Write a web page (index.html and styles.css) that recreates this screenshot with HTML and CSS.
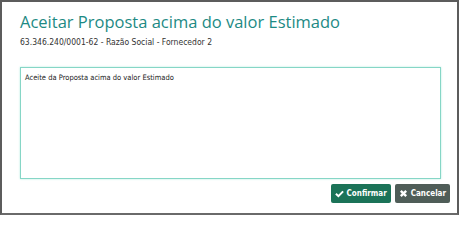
FILE: index.html
```html
<!DOCTYPE html>
<html lang="pt-BR">
<head>
<meta charset="utf-8">
<link rel="stylesheet" href="styles.css">
</head>
<body>
<div class="modal">
  <div class="modal-header">
    <h1 class="title">Aceitar Proposta acima do valor Estimado</h1>
    <p class="subtitle">63.346.240/0001-62 - Razão Social - Fornecedor 2</p>
  </div>
  <div class="modal-body">
    <div class="textarea">Aceite da Proposta acima do valor Estimado</div>
  </div>
  <div class="modal-footer">
    <button class="btn btn-confirm"><svg class="ico" viewBox="0 0 10 10"><path d="M1 5.2 L3.8 8 L9 2.6" fill="none" stroke="#fff" stroke-width="2.2"/></svg>Confirmar</button>
    <button class="btn btn-cancel"><svg class="ico" viewBox="0 0 10 10"><path d="M2 2 L8 8 M8 2 L2 8" fill="none" stroke="#fff" stroke-width="2.6"/></svg>Cancelar</button>
  </div>
</div>
</body>
</html>
```
FILE: styles.css
```css
html, body { margin: 0; padding: 0; background: #fff; }
.modal {
  box-sizing: border-box;
  width: 459px;
  height: 215px;
  border: 2px solid #5c5c5c;
  border-bottom-color: #6a6a6a;
  background: #fff;
  display: flex;
  flex-direction: column;
}
.modal-header { padding: 10px 18px 0; }
.title {
  margin: 0;
  font-family: "Open Sans", sans-serif;
  font-weight: 400;
  font-size: 16.5px;
  line-height: 20px;
  color: #1d8a84;
}
.subtitle {
  margin: 4px 0 0;
  font-family: "DejaVu Sans Condensed", "DejaVu Sans", sans-serif;
  font-size: 8.5px;
  line-height: 12px;
  color: #333;
}
.modal-body { padding: 19px 16px 0 18px; }
.textarea {
  box-sizing: border-box;
  height: 112px;
  border: 1px solid #86d6c6;
  box-shadow: 0 0 2px #b5ebdf;
  padding: 5px 4px;
  font-family: "DejaVu Sans Condensed", "DejaVu Sans", sans-serif;
  font-size: 7.5px;
  color: #222;
}
.modal-footer {
  display: flex;
  justify-content: flex-end;
  gap: 4px;
  padding: 5px 7px 0 0;
}
.btn {
  display: flex;
  align-items: center;
  gap: 3px;
  height: 19px;
  padding: 0 4px;
  border: 0;
  border-radius: 2px;
  color: #fff;
  font-family: "DejaVu Sans Condensed", "DejaVu Sans", sans-serif;
  font-weight: bold;
  font-size: 8px;
}
.btn-confirm { background: #1b7358; }
.btn-cancel { background: #4f5d58; }
.ico { width: 9px; height: 9px; }
```
